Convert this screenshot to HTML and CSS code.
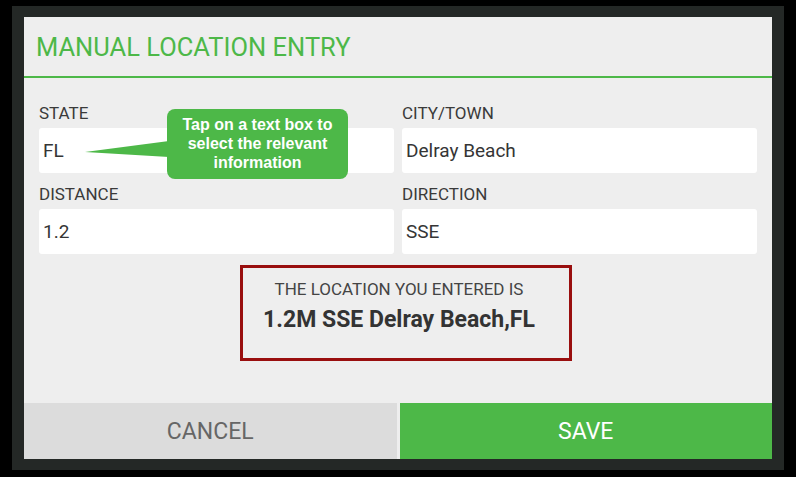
FILE: index.html
```html
<!DOCTYPE html>
<html>
<head>
    <meta charset="UTF-8">
    <title>Manual Location Entry</title>
    <link rel="stylesheet" href="styles.css">
</head>
<body>
    <div class="frame">
        <div class="panel">
            <header class="panel_header">
                <h1>MANUAL LOCATION ENTRY</h1>
            </header>

            <div class="location_form">
                <div class="field">
                    <label>STATE</label>
                    <div class="text_box">FL</div>
                </div>
                <div class="field">
                    <label>CITY/TOWN</label>
                    <div class="text_box">Delray Beach</div>
                </div>
                <div class="field">
                    <label>DISTANCE</label>
                    <div class="text_box">1.2</div>
                </div>
                <div class="field">
                    <label>DIRECTION</label>
                    <div class="text_box">SSE</div>
                </div>
            </div>

            <div class="result">
                <p class="result_label">THE LOCATION YOU ENTERED IS</p>
                <p class="result_value">1.2M SSE Delray Beach,FL</p>
            </div>

            <!-- callout pointing at the state box -->
            <div class="callout">
                <svg class="callout_tail" width="86" height="20" viewBox="0 0 86 20">
                    <polygon points="2,13 86,2 86,18" fill="#4db848"/>
                </svg>
                Tap on a text box to<br>select the relevant<br>information
            </div>

            <div class="actions">
                <button class="btn_cancel">CANCEL</button>
                <button class="btn_save">SAVE</button>
            </div>
        </div>
    </div>
</body>
</html>
```

FILE: styles.css
```css
:root {
    --clr-green: #4db848;
    --clr-panel: #eeeeee;
    --clr-text: #353535;
    --clr-red: #990e0e;
}

* {
    box-sizing: border-box;
}

body {
    margin: 0;
    background-color: #000;
    font-family: Roboto, "Liberation Sans", sans-serif;
    color: var(--clr-text);
}

.frame {
    width: 772px;
    height: 464px;
    margin: 6px 0 0 12px;
    padding: 11px 12px;
    background-color: #242826;
}

.panel {
    position: relative;
    height: 100%;
    background-color: var(--clr-panel);
    display: flex;
    flex-direction: column;
}

.panel_header {
    padding: 15px 12px 14px;
    border-bottom: 2px solid var(--clr-green);
}

.panel_header h1 {
    margin: 0;
    font-size: 25.5px;
    line-height: 30px;
    font-weight: 400;
    color: var(--clr-green);
}

.location_form {
    display: grid;
    grid-template-columns: 1fr 1fr;
    column-gap: 8px;
    row-gap: 11px;
    padding: 25px 15px 0;
}

.field label {
    display: block;
    font-size: 17px;
    line-height: 20px;
    margin-bottom: 5px;
    color: #3a3a3a;
}

.text_box {
    height: 45px;
    padding: 0 4px;
    background-color: #fff;
    border-radius: 3px;
    font-size: 19px;
    line-height: 45px;
    color: var(--clr-text);
}

.result {
    width: 332px;
    height: 96px;
    margin: 11px 0 0 216px;
    padding: 11px 14px 0 0;
    border: 3px solid var(--clr-red);
    text-align: center;
}

.result p {
    margin: 0;
}

.result_label {
    font-size: 17px;
    line-height: 20px;
    color: #444;
}

.result .result_value {
    margin-top: 7px;
    font-size: 23px;
    line-height: 28px;
    font-weight: 700;
    color: #333;
}

.callout {
    position: absolute;
    left: 143px;
    top: 92px;
    width: 181px;
    height: 70px;
    padding-top: 6px;
    border-radius: 8px;
    background-color: var(--clr-green);
    color: #fff;
    font-family: "Liberation Sans", Arial, sans-serif;
    font-weight: 700;
    font-size: 16px;
    line-height: 19px;
    text-align: center;
}

.callout_tail {
    position: absolute;
    left: -84px;
    top: 30px;
}

.actions {
    margin-top: auto;
    display: grid;
    grid-template-columns: 1fr 1fr;
    gap: 3px;
}

.actions button {
    height: 56px;
    border: none;
    font-family: inherit;
    font-size: 23px;
    cursor: pointer;
}

.btn_cancel {
    background-color: #dcdcdc;
    color: #666;
}

.btn_save {
    background-color: var(--clr-green);
    color: #fff;
}
```
